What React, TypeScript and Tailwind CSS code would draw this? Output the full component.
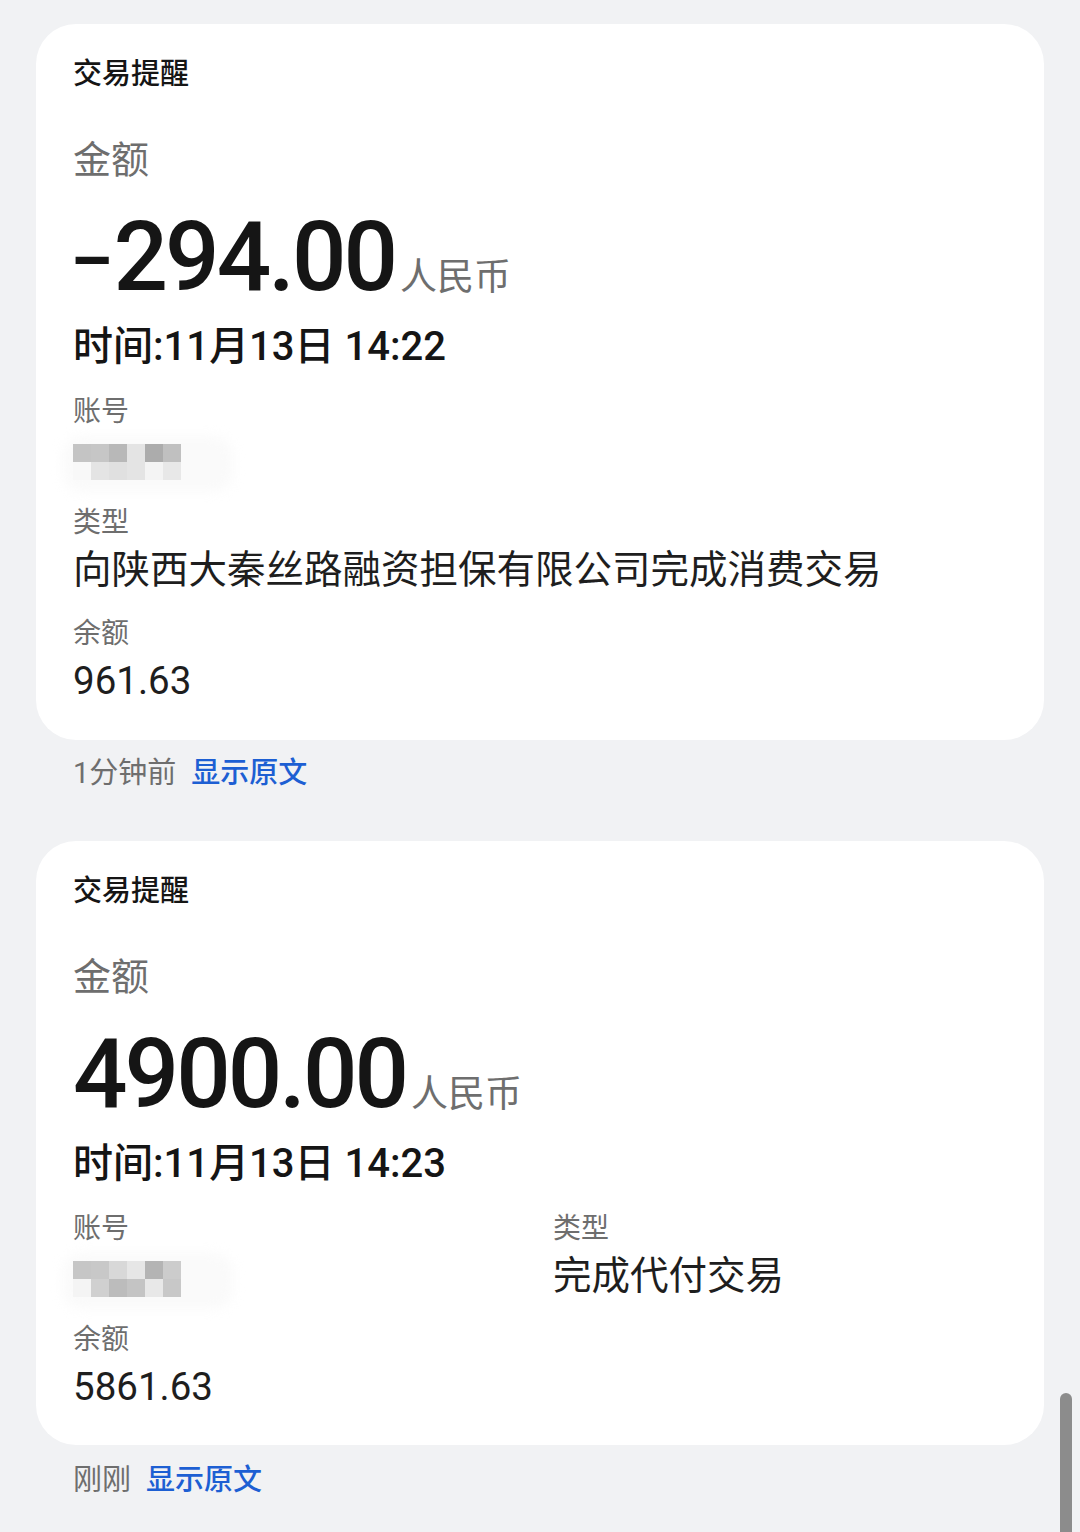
import React from "react";

const FONT = { fontFamily: 'Roboto, "Noto Sans CJK SC", sans-serif' };

function Mosaic({ rows }: { rows: string[][] }) {
  return (
    <div className="relative h-[50px] flex flex-col justify-center pt-[6px]">
      <div className="absolute left-[-10px] top-[2px] w-[170px] h-[56px] rounded-[20px] bg-[#fafafa] blur-[6px]" />
      <div className="relative flex flex-col">
        {rows.map((r, i) => (
          <div key={i} className="flex">
            {r.map((c, j) => (
              <div key={j} className="w-[18px] h-[18px]" style={{ backgroundColor: c }} />
            ))}
          </div>
        ))}
      </div>
    </div>
  );
}

function Label({ children }: { children: React.ReactNode }) {
  return <div className="h-[40px] leading-[40px] text-[28px] text-[#6e6e6e]">{children}</div>;
}

function Value({ children }: { children: React.ReactNode }) {
  return (
    <div className="mt-[2px] h-[50px] leading-[50px] text-[38.5px] text-[#1e1e1e] whitespace-nowrap">{children}</div>
  );
}

function Header({ amount, time }: { amount: React.ReactNode; time: string }) {
  return (
    <>
      <div className="pt-[2px] h-[40px] leading-[40px] text-[29px] font-medium text-[#151515]">交易提醒</div>
      <div className="mt-[43px] h-[50px] leading-[50px] text-[38px] text-[#6e6e6e]">金额</div>
      <div className="mt-[17px] h-[110px] leading-[110px] flex items-baseline whitespace-nowrap">
        <span className="text-[96px] font-medium tracking-[-3px] text-[#151515]">{amount}</span>
        <span className="ml-[5px] text-[37px] text-[#6e6e6e]">人民币</span>
      </div>
      <div className="mt-[10px] h-[50px] leading-[50px] text-[40px] font-medium text-[#151515] whitespace-nowrap">
        {time}
      </div>
    </>
  );
}

const mosaic1 = [
  ["#c4c4c4", "#c6c6c6", "#b8b8b8", "#e4e4e4", "#acacac", "#c0c0c0"],
  ["#f8f8f8", "#e4e4e4", "#e0e0e0", "#e4e4e4", "#f4f4f4", "#e8e8e8"],
];
const mosaic2 = [
  ["#c6c6c6", "#c8c8c8", "#d8d8d8", "#e6e6e6", "#b4b4b4", "#cccccc"],
  ["#f4f4f4", "#d0d0d0", "#bcbcbc", "#c4c4c4", "#e8e8e8", "#c8c8c8"],
];

export default function App() {
  return (
    <div className="relative w-[1080px] h-[1532px] overflow-hidden bg-[#f1f2f4]" style={FONT}>
      <div className="pt-[24px] pl-[36px] pr-[36px]">
        {/* Card 1 */}
        <div className="bg-white rounded-[40px] pl-[37px] pr-[37px] pt-[28px] pb-[34px]">
          <Header
            amount={
              <>
                <span className="inline-block origin-left scale-x-[1.45] font-normal mr-[17px]">-</span>294.00
              </>
            }
            time="时间:11月13日 14:22"
          />
          <div className="mt-[20px]">
            <Label>账号</Label>
            <div className="mt-[2px]">
              <Mosaic rows={mosaic1} />
            </div>
          </div>
          <div className="mt-[19px]">
            <Label>类型</Label>
            <Value>向陕西大秦丝路融资担保有限公司完成消费交易</Value>
          </div>
          <div className="mt-[19px]">
            <Label>余额</Label>
            <Value>961.63</Value>
          </div>
        </div>
        <div className="mt-[13px] pl-[37px] h-[40px] leading-[40px] text-[29px] flex">
          <span className="text-[#6e6e6e]">1分钟前</span>
          <span className="ml-[15px] font-medium text-[#1d5fd3]">显示原文</span>
        </div>

        {/* Card 2 */}
        <div className="mt-[48px] bg-white rounded-[40px] pl-[37px] pr-[37px] pt-[28px] pb-[33px]">
          <Header amount="4900.00" time="时间:11月13日 14:23" />
          <div className="mt-[20px] grid grid-cols-[480px_1fr]">
            <div>
              <Label>账号</Label>
              <div className="mt-[2px]">
                <Mosaic rows={mosaic2} />
              </div>
            </div>
            <div>
              <Label>类型</Label>
              <Value>完成代付交易</Value>
            </div>
          </div>
          <div className="mt-[19px]">
            <Label>余额</Label>
            <Value>5861.63</Value>
          </div>
        </div>
        <div className="mt-[15px] pl-[37px] h-[40px] leading-[40px] text-[29px] flex">
          <span className="text-[#6e6e6e]">刚刚</span>
          <span className="ml-[15px] font-medium text-[#1d5fd3]">显示原文</span>
        </div>
      </div>

      {/* scrollbar */}
      <div className="absolute left-[1060px] top-[1393px] w-[12px] h-[160px] rounded-full bg-[#8c8c8c]" />
    </div>
  );
}
